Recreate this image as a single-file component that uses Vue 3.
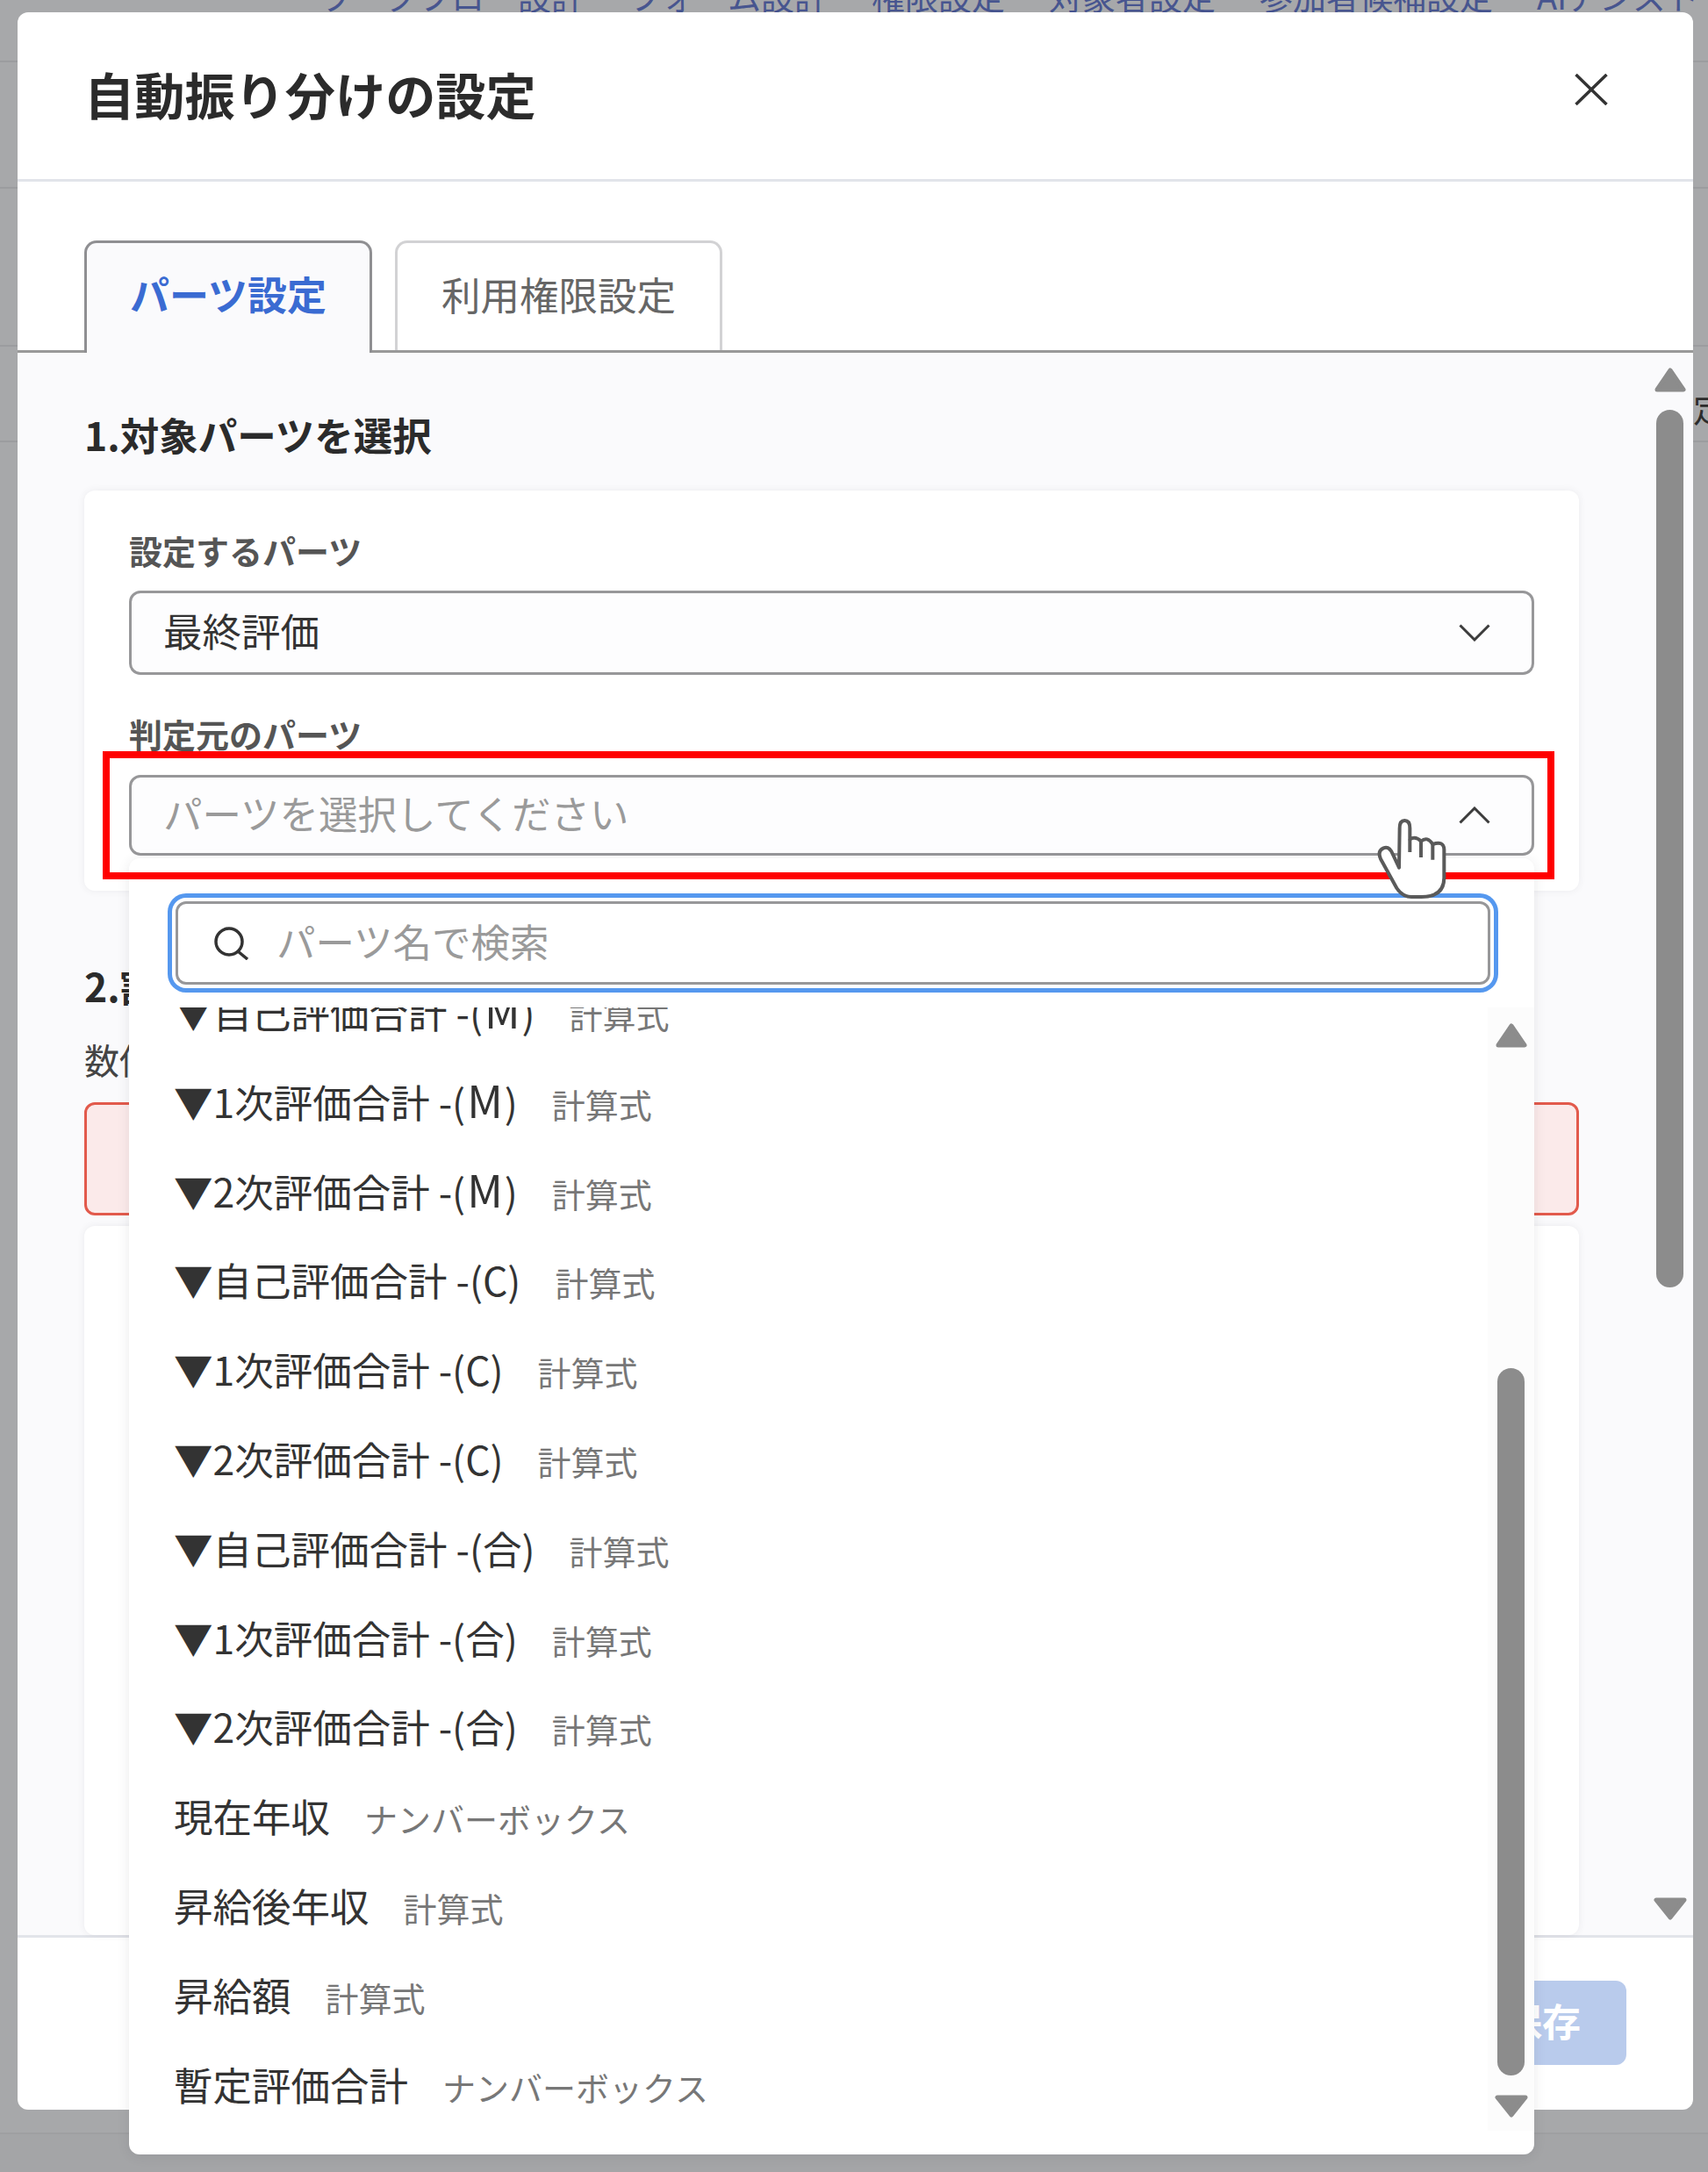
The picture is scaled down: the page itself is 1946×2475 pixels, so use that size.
<script setup>
const navItems = ['ワークフロー設計', 'フォーム設計', '権限設定', '対象者設定', '参加者候補設定', 'AIアシスト']
const parts = [
  ['▼自己評価合計 -(M)', '計算式'],
  ['▼1次評価合計 -(M)', '計算式'],
  ['▼2次評価合計 -(M)', '計算式'],
  ['▼自己評価合計 -(C)', '計算式'],
  ['▼1次評価合計 -(C)', '計算式'],
  ['▼2次評価合計 -(C)', '計算式'],
  ['▼自己評価合計 -(合)', '計算式'],
  ['▼1次評価合計 -(合)', '計算式'],
  ['▼2次評価合計 -(合)', '計算式'],
  ['現在年収', 'ナンバーボックス'],
  ['昇給後年収', '計算式'],
  ['昇給額', '計算式'],
  ['暫定評価合計', 'ナンバーボックス']
].map(([name, tag]) => {
  const [before, after] = name.split('M')
  return { name, before, after, tag }
})
</script>

<template>
  <div class="page">
    <div class="backdrop">
      <nav class="nav">
        <span v-for="n in navItems" :key="n">{{ n }}</span>
      </nav>
      <div class="bd-row r1"></div>
      <div class="bd-row r2"></div>
      <div class="bd-row r3"><span>設定</span></div>
    </div>
    <div class="bd-bottom"></div>

    <div class="modal">
      <header class="m-head">
        <h1>自動振り分けの設定</h1>
        <svg class="close" viewBox="0 0 38 36"><path d="M1.5 1 36.5 35M36.500 1 1.500 35" /></svg>
      </header>
      <div class="tabs">
        <div class="tab active">パーツ設定</div>
        <div class="tab">利用権限設定</div>
      </div>
      <div class="m-body">
        <div class="content">
          <h2 class="sec first">1.対象パーツを選択</h2>
          <section class="card">
            <div class="label">設定するパーツ</div>
            <div class="select s1">
              <span>最終評価</span>
              <svg class="chev" viewBox="0 0 36 20"><path d="M1.500 1.500 18 18 34.500 1.500" /></svg>
            </div>
            <div class="label l2">判定元のパーツ</div>
            <div class="select s2">
              <span class="ph">パーツを選択してください</span>
              <svg class="chev" viewBox="0 0 36 20"><path d="M1.500 18.500 18 2 34.500 18.500" /></svg>
            </div>
          </section>
          <h2 class="sec second">2.割り振りの設定</h2>
          <div class="sub">数値の範囲</div>
          <div class="alert"></div>
          <section class="card grow"></section>
        </div>
        <div class="rail main-rail">
          <svg class="arrow up" viewBox="0 0 36 28"><path d="M18 3 33 25H3Z" /></svg>
          <div class="thumb"></div>
          <svg class="arrow down" viewBox="0 0 38 26"><path d="M3 3H35L19 23Z" /></svg>
        </div>
      </div>
      <footer class="m-foot">
        <button class="save"><span>保存</span></button>
      </footer>
    </div>

    <div class="dropdown">
      <div class="search-wrap">
        <div class="search">
          <svg class="s-icon" viewBox="0 0 42 38"><circle cx="18" cy="17" r="15" /><path d="M28 28 39 37" /></svg>
          <span class="ph">パーツ名で検索</span>
        </div>
      </div>
      <div class="d-main">
        <div class="viewport">
          <ul class="list">
            <li v-for="p in parts" :key="p.name">
              <span>{{ p.before }}<span v-if="p.after !== undefined" class="m">M</span>{{ p.after }}</span>
              <span class="tag">{{ p.tag }}</span>
            </li>
          </ul>
        </div>
        <div class="rail d-rail">
          <svg class="arrow up" viewBox="0 0 36 28"><path d="M18 3 33 25H3Z" /></svg>
          <div class="thumb"></div>
          <svg class="arrow down" viewBox="0 0 38 26"><path d="M3 3H35L19 23Z" /></svg>
        </div>
      </div>
    </div>

    <div class="mark"></div>

    <svg class="hand" viewBox="268 155 240 280">
      <path class="h-body" d="M345 190Q345 164 362 164 380 164 380 190L380 228Q400 216 418 235 440 216 458 245 495 232 497 262L497 360Q497 425 420 425L385 425Q355 425 335 395L280 295Q268 268 290 258 310 250 322 280L343 325Z" />
      <path class="h-line" d="M380 228V272M418 235V290M458 245V298" />
    </svg>
  </div>
</template>

<style scoped>
.page {
  position: relative;
  width: 1946px;
  height: 2475px;
  overflow: hidden;
  background: #a7a8aa;
  font-family: "Noto Sans CJK JP", "Noto Sans", sans-serif;
  color: #333;
}
.nav {
  display: flex;
  gap: 50px;
  height: 94px;
  box-sizing: border-box;
  margin-top: -23px;
  padding-left: 362px;
  font-size: 38px;
  line-height: 36px;
  white-space: nowrap;
  color: #47558f;
  border-bottom: 2px solid #9b9c9f;
}
.bd-row {
  box-sizing: border-box;
  border-bottom: 2px solid #9b9c9f;
}
.r1 { height: 144px; }
.r2 { height: 180px; }
.r3 {
  height: 109px;
  padding: 48px 0 0 1891px;
  font-size: 38px;
  line-height: 44px;
  white-space: nowrap;
  color: #2c2c2c;
}
.bd-bottom {
  position: absolute;
  left: 0;
  right: 0;
  top: 2430px;
  height: 45px;
  background: #a4a5a7;
  border-top: 2px solid #9e9fa1;
}

.modal {
  position: absolute;
  left: 20px;
  top: 14px;
  width: 1909px;
  height: 2390px;
  display: flex;
  flex-direction: column;
  background: #fff;
  border-radius: 12px;
  overflow: hidden;
}
.m-head {
  height: 193px;
  flex: none;
  box-sizing: border-box;
  border-bottom: 3px solid #e2e4ea;
  display: flex;
  justify-content: space-between;
  padding: 0 97px 0 76px;
}
.m-head h1 {
  margin: 0;
  font-size: 57.200px;
  font-weight: 700;
  line-height: 184px;
  color: #2b2b2b;
}
.close {
  width: 38px;
  height: 36px;
  margin-top: 70px;
}
.close path {
  fill: none;
  stroke: #333;
  stroke-width: 3.500px;
}
.tabs {
  flex: none;
  height: 195px;
  box-sizing: border-box;
  padding: 67px 0 0 76px;
  display: flex;
  gap: 26px;
  border-bottom: 3px solid #999;
}
.tab {
  box-sizing: border-box;
  width: 373px;
  height: 125px;
  text-align: center;
  line-height: 116px;
  font-size: 44.500px;
  color: #666;
  background: #fff;
  border: 3px solid #d2d2d4;
  border-bottom: none;
  border-radius: 14px 14px 0 0;
}
.tab.active {
  width: 328px;
  height: 128px;
  font-size: 45px;
  color: #3a6bd2;
  font-weight: 700;
  background: #fafafc;
  border-color: #8f8f92;
}
.m-body {
  flex: 1;
  min-height: 0;
  display: flex;
  background: #fafafc;
  position: relative;
}
.content {
  flex: 1;
  min-width: 0;
  box-sizing: border-box;
  padding: 0 77px 0 76px;
  display: flex;
  flex-direction: column;
}
.sec {
  margin: 0;
  font-size: 44.500px;
  line-height: 60px;
  font-weight: 700;
  color: #2b2b2b;
}
.sec.first { margin-top: 63px; }
.sec.second { margin-top: 78px; }
.card {
  margin-top: 34px;
  background: #fff;
  border-radius: 12px;
  box-shadow: 0 0 8px rgba(60, 60, 80, .08);
  box-sizing: border-box;
  padding: 43px 51px 40px;
}
.label {
  font-size: 38px;
  font-weight: 700;
  line-height: 50px;
  color: #555;
}
.l2 { margin-top: 42px; }
.select {
  box-sizing: border-box;
  display: flex;
  align-items: center;
  justify-content: space-between;
  margin-top: 21px;
  padding: 0 47px 0 36px;
  background: #fdfdfe;
  border: 3px solid #979799;
  border-radius: 13px;
  font-size: 44.500px;
  color: #333;
}
.select > span { padding-bottom: 8px; }
.s1 { height: 96px; }
.s2 { height: 92px; margin-top: 22px; }
.ph { color: #9a9a9a; }
.chev {
  width: 36px;
  height: 20px;
}
.chev path {
  fill: none;
  stroke: #3c3c3c;
  stroke-width: 3px;
}
.sub {
  margin-top: 24px;
  font-size: 40px;
  line-height: 60px;
  color: #444;
}
.alert {
  height: 129px;
  flex: none;
  margin-top: 19px;
  box-sizing: border-box;
  background: #fbeaea;
  border: 3px solid #e25a4c;
  border-radius: 12px;
}
.card.grow {
  margin-top: 12px;
  flex: 1;
}
.rail {
  flex: none;
  width: 53px;
  display: flex;
  flex-direction: column;
  align-items: center;
}
.thumb {
  width: 31px;
  border-radius: 16px;
  background: #8c8c8c;
}
.arrow {
  display: block;
  flex: none;
}
.arrow path {
  fill: #8c8c8c;
  stroke: #8c8c8c;
  stroke-width: 5px;
  stroke-linejoin: round;
}
.arrow.up { width: 36px; height: 28px; }
.arrow.down { width: 38px; height: 26px; }
.main-rail { padding-top: 17px; }
.main-rail .thumb { height: 1000px; margin-top: 20px; }
.main-rail .down { margin-top: 695px; }
.d-rail {
  padding-top: 18px;
  background: #fcfcfc;
}
.d-rail .thumb { height: 806px; margin-top: 365px; }
.d-rail .down { margin-top: 22px; }
.m-foot {
  flex: none;
  height: 199px;
  box-sizing: border-box;
  border-top: 3px solid #e2e4ea;
  display: flex;
  justify-content: flex-end;
  padding: 49px 76px 0 0;
}
.save {
  width: 192px;
  height: 96px;
  border: none;
  border-radius: 12px;
  background: #b9cbec;
  color: #fff;
  font-family: inherit;
  font-size: 44px;
  font-weight: 700;
}
.save span {
  display: block;
  padding-bottom: 6px;
}

.dropdown {
  position: absolute;
  left: 147px;
  top: 978px;
  width: 1601px;
  height: 1477px;
  display: flex;
  flex-direction: column;
  background: #fff;
  border-radius: 12px;
  box-shadow: 0 2px 14px rgba(50, 50, 60, .1);
}
.search-wrap {
  flex: none;
  height: 170px;
  box-sizing: border-box;
  padding: 49px 50px 26px 53px;
}
.search {
  height: 95px;
  box-sizing: border-box;
  display: flex;
  align-items: center;
  gap: 30px;
  padding-left: 40px;
  font-size: 44.500px;
  background: #fff;
  border: 3px solid #979799;
  border-radius: 12px;
  box-shadow: 0 0 0 4px #fff, 0 0 0 9px #5598ef;
}
.search .ph { padding-bottom: 7px; }
.s-icon {
  width: 42px;
  height: 38px;
  flex: none;
}
.s-icon circle,
.s-icon path {
  fill: none;
  stroke: #333;
  stroke-width: 3.500px;
}
.d-main {
  flex: none;
  height: 1280px;
  display: flex;
}
.viewport {
  flex: 1;
  min-width: 0;
  overflow: hidden;
}
.list {
  list-style: none;
  margin: -46px 0 0;
  padding: 0 0 0 51px;
}
.list li {
  height: 101.800px;
  display: flex;
  align-items: baseline;
  gap: 39px;
  font-size: 44.500px;
  line-height: 101.800px;
  color: #333;
  white-space: nowrap;
}
.m {
  font-size: 50px;
  line-height: 0;
  margin: 0 2px;
}
.tag {
  font-size: 38px;
  color: #777;
}

.mark {
  position: absolute;
  left: 117px;
  top: 856px;
  width: 1654px;
  height: 146px;
  box-sizing: border-box;
  border: 8px solid #f00;
  pointer-events: none;
}
.hand {
  position: absolute;
  left: 1569px;
  top: 932px;
  width: 80px;
  height: 93.333px;
}
.h-body {
  fill: #fff;
  stroke: #5a5a5a;
  stroke-width: 12px;
  stroke-linejoin: round;
}
.h-line {
  fill: none;
  stroke: #5a5a5a;
  stroke-width: 12px;
}
</style>
